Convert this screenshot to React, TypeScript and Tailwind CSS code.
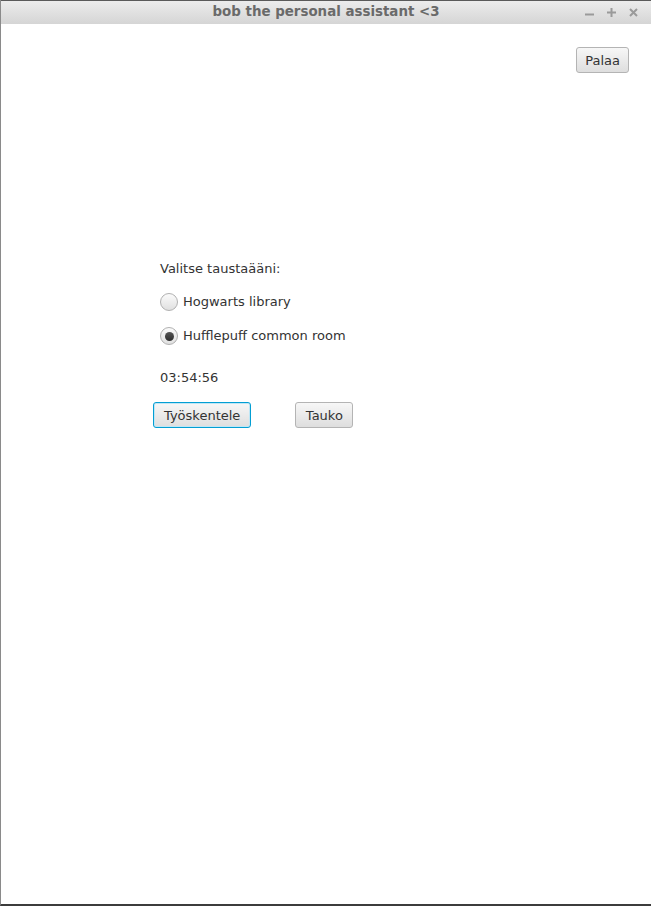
import React from 'react'

const font = { fontFamily: '"DejaVu Sans", "Liberation Sans", sans-serif' }

function FxButton({ label, focused, px }: { label: string; focused?: boolean; px: string }) {
  return (
    <button
      className={
        (focused
          ? 'h-[26px] rounded-[3px] border border-[#039ed3] shadow-[inset_0_0_0_1px_#bfe6f5] bg-gradient-to-b from-[#f7f7f7] to-[#dedede] text-[13px] text-[#333] leading-none '
          : 'h-[26px] rounded-[3px] border border-[#b4b4b4] bg-gradient-to-b from-[#f7f7f7] to-[#dedede] text-[13px] text-[#333] leading-none ') + px
      }
    >
      {label}
    </button>
  )
}

function Radio({ label, checked }: { label: string; checked?: boolean }) {
  return (
    <div className="flex items-center h-[18px]">
      <span className="w-[18px] h-[18px] rounded-full border border-[#b0b0b0] bg-gradient-to-b from-[#fbfbfb] to-[#e0e0e0] flex items-center justify-center">
        {checked && <span className="w-[9px] h-[9px] rounded-full bg-gradient-to-b from-[#555] to-[#2e2e2e]" />}
      </span>
      <span className="ml-[5px] text-[13px] text-[#333]">{label}</span>
    </div>
  )
}

export default function App() {
  return (
    <div style={font} className="w-[651px] h-[906px] flex flex-col bg-white border-l border-[#8a8a8a] border-b-2 border-b-[#3c3c3c] box-border">
      <div className="relative h-[24px] shrink-0 border-t border-[#5a5a5a] bg-gradient-to-b from-[#ececec] to-[#d5d5d5] flex items-center justify-center">
        <span className="text-[13.4px] font-bold text-[#6a6a6a]">bob the personal assistant &lt;3</span>
        <div className="absolute right-[13px] top-0 h-full flex items-center gap-[13px]">
          <svg width="9" height="9" viewBox="0 0 9 9"><path d="M0 6.5h9" stroke="#9a9a9a" strokeWidth="2" /></svg>
          <svg width="9" height="9" viewBox="0 0 9 9"><path d="M0 4.5h9M4.5 0v9" stroke="#9a9a9a" strokeWidth="2" /></svg>
          <svg width="9" height="9" viewBox="0 0 9 9"><path d="M1 1l7 7M8 1l-7 7" stroke="#9a9a9a" strokeWidth="2" /></svg>
        </div>
      </div>
      <div className="flex-1 flex flex-col">
        <div className="flex justify-end pt-[23px] pr-[22px]">
          <FxButton label="Palaa" px="px-[8px]" />
        </div>
        <div className="ml-[159px] mt-[188px] flex flex-col">
          <div className="h-[16px] leading-[16px] text-[13px] text-[#333]">Valitse taustaääni:</div>
          <div className="mt-[16px]">
            <Radio label="Hogwarts library" />
          </div>
          <div className="mt-[16px]">
            <Radio label="Hufflepuff common room" checked />
          </div>
          <div className="mt-[25px] h-[16px] leading-[16px] text-[13px] text-[#333]">03:54:56</div>
          <div className="mt-[16px] -ml-[7px] flex gap-[44px]">
            <FxButton label="Työskentele" focused px="px-[10px]" />
            <FxButton label="Tauko" px="px-[9.5px]" />
          </div>
        </div>
      </div>
    </div>
  )
}
